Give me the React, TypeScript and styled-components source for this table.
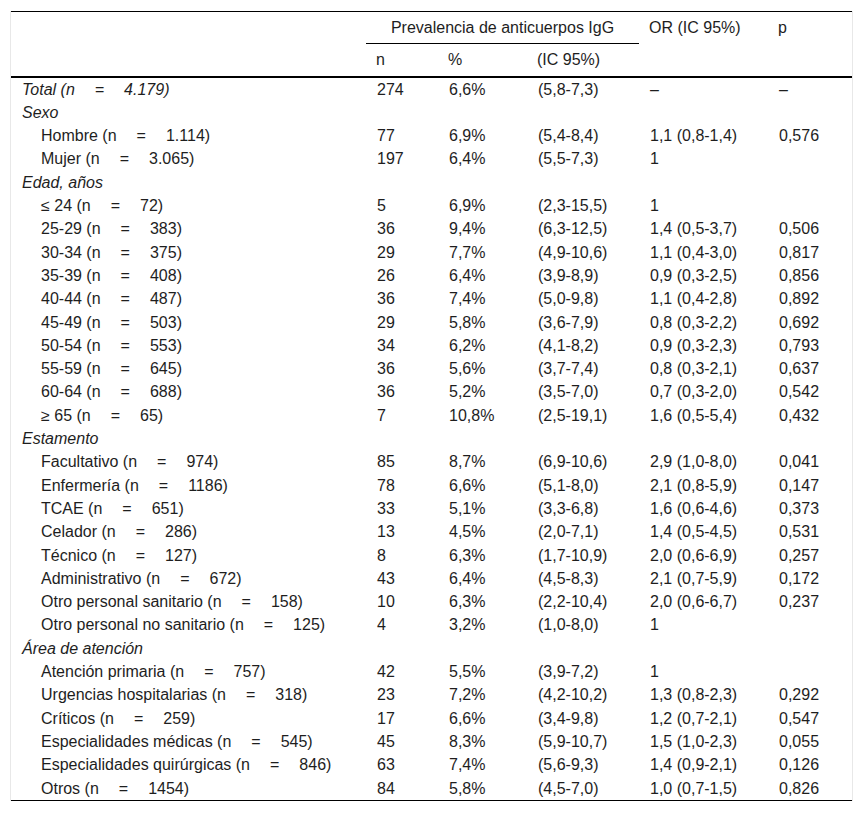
import React from "react";
import styled, { createGlobalStyle } from "styled-components";

const GlobalStyle = createGlobalStyle`
  body {
    margin: 0;
    background: #fff;
    font-family: "Liberation Sans", Arial, sans-serif;
    color: #1e1e1e;
  }
`;

const Frame = styled.div`
  margin: 11px 10px 0 10px;
  border-left: 1px solid #e8e8e8;
  border-right: 1px solid #e8e8e8;
`;

const Table = styled.table`
  width: 100%;
  border-collapse: collapse;
  table-layout: fixed;
  font-size: 16px;
  border-top: 1px solid #000;
  border-bottom: 1px solid #000;
`;

const Th = styled.th<{ $group?: boolean }>`
  text-align: left;
  font-weight: normal;
  padding: 7px 10px 7px 10px;
  line-height: 17.3px;
  vertical-align: top;
  border-bottom: ${(p) => (p.$group ? "1px solid #000" : "none")};
`;

const HeadRow = styled.tr<{ $last?: boolean }>`
  border-bottom: ${(p) => (p.$last ? "2px solid #000" : "none")};
`;

const Td = styled.td<{ $indent?: boolean; $italic?: boolean }>`
  padding: 3px 10px 3px ${(p) => (p.$indent ? "30px" : "11px")};
  line-height: 17.3px;
  font-style: ${(p) => (p.$italic ? "italic" : "normal")};
  white-space: nowrap;
`;

type Row =
  | { kind: "group"; label: string }
  | { kind: "item"; label: string; n: string; cells: string[]; italic?: boolean; top?: boolean };

const eq = (name: string, n: string) => `${name} (n\u2003\u2005=\u2003\u2005${n})`;

const rows: Row[] = [
  { kind: "item", top: true, italic: true, label: eq("Total", "4.179"), n: "274", cells: ["6,6%", "(5,8-7,3)", "–", "–"] },
  { kind: "group", label: "Sexo" },
  { kind: "item", label: eq("Hombre", "1.114"), n: "77", cells: ["6,9%", "(5,4-8,4)", "1,1 (0,8-1,4)", "0,576"] },
  { kind: "item", label: eq("Mujer", "3.065"), n: "197", cells: ["6,4%", "(5,5-7,3)", "1", ""] },
  { kind: "group", label: "Edad, años" },
  { kind: "item", label: eq("≤ 24", "72"), n: "5", cells: ["6,9%", "(2,3-15,5)", "1", ""] },
  { kind: "item", label: eq("25-29", "383"), n: "36", cells: ["9,4%", "(6,3-12,5)", "1,4 (0,5-3,7)", "0,506"] },
  { kind: "item", label: eq("30-34", "375"), n: "29", cells: ["7,7%", "(4,9-10,6)", "1,1 (0,4-3,0)", "0,817"] },
  { kind: "item", label: eq("35-39", "408"), n: "26", cells: ["6,4%", "(3,9-8,9)", "0,9 (0,3-2,5)", "0,856"] },
  { kind: "item", label: eq("40-44", "487"), n: "36", cells: ["7,4%", "(5,0-9,8)", "1,1 (0,4-2,8)", "0,892"] },
  { kind: "item", label: eq("45-49", "503"), n: "29", cells: ["5,8%", "(3,6-7,9)", "0,8 (0,3-2,2)", "0,692"] },
  { kind: "item", label: eq("50-54", "553"), n: "34", cells: ["6,2%", "(4,1-8,2)", "0,9 (0,3-2,3)", "0,793"] },
  { kind: "item", label: eq("55-59", "645"), n: "36", cells: ["5,6%", "(3,7-7,4)", "0,8 (0,3-2,1)", "0,637"] },
  { kind: "item", label: eq("60-64", "688"), n: "36", cells: ["5,2%", "(3,5-7,0)", "0,7 (0,3-2,0)", "0,542"] },
  { kind: "item", label: eq("≥ 65", "65"), n: "7", cells: ["10,8%", "(2,5-19,1)", "1,6 (0,5-5,4)", "0,432"] },
  { kind: "group", label: "Estamento" },
  { kind: "item", label: eq("Facultativo", "974"), n: "85", cells: ["8,7%", "(6,9-10,6)", "2,9 (1,0-8,0)", "0,041"] },
  { kind: "item", label: eq("Enfermería", "1186"), n: "78", cells: ["6,6%", "(5,1-8,0)", "2,1 (0,8-5,9)", "0,147"] },
  { kind: "item", label: eq("TCAE", "651"), n: "33", cells: ["5,1%", "(3,3-6,8)", "1,6 (0,6-4,6)", "0,373"] },
  { kind: "item", label: eq("Celador", "286"), n: "13", cells: ["4,5%", "(2,0-7,1)", "1,4 (0,5-4,5)", "0,531"] },
  { kind: "item", label: eq("Técnico", "127"), n: "8", cells: ["6,3%", "(1,7-10,9)", "2,0 (0,6-6,9)", "0,257"] },
  { kind: "item", label: eq("Administrativo", "672"), n: "43", cells: ["6,4%", "(4,5-8,3)", "2,1 (0,7-5,9)", "0,172"] },
  { kind: "item", label: eq("Otro personal sanitario", "158"), n: "10", cells: ["6,3%", "(2,2-10,4)", "2,0 (0,6-6,7)", "0,237"] },
  { kind: "item", label: eq("Otro personal no sanitario", "125"), n: "4", cells: ["3,2%", "(1,0-8,0)", "1", ""] },
  { kind: "group", label: "Área de atención" },
  { kind: "item", label: eq("Atención primaria", "757"), n: "42", cells: ["5,5%", "(3,9-7,2)", "1", ""] },
  { kind: "item", label: eq("Urgencias hospitalarias", "318"), n: "23", cells: ["7,2%", "(4,2-10,2)", "1,3 (0,8-2,3)", "0,292"] },
  { kind: "item", label: eq("Críticos", "259"), n: "17", cells: ["6,6%", "(3,4-9,8)", "1,2 (0,7-2,1)", "0,547"] },
  { kind: "item", label: eq("Especialidades médicas", "545"), n: "45", cells: ["8,3%", "(5,9-10,7)", "1,5 (1,0-2,3)", "0,055"] },
  { kind: "item", label: eq("Especialidades quirúrgicas", "846"), n: "63", cells: ["7,4%", "(5,6-9,3)", "1,4 (0,9-2,1)", "0,126"] },
  { kind: "item", label: eq("Otros", "1454"), n: "84", cells: ["5,8%", "(4,5-7,0)", "1,0 (0,7-1,5)", "0,826"] },
];

const widths = [355, 72, 89, 112, 129, 84];

export default function App() {
  return (
    <>
      <GlobalStyle />
      <Frame>
        <Table>
          <colgroup>
            {widths.map((w, i) => (
              <col key={i} style={{ width: w }} />
            ))}
          </colgroup>
          <thead>
            <HeadRow>
              <Th />
              <Th colSpan={3} $group style={{ textAlign: "center" }}>
                Prevalencia de anticuerpos IgG
              </Th>
              <Th>OR (IC 95%)</Th>
              <Th>p</Th>
            </HeadRow>
            <HeadRow $last>
              <Th />
              <Th>n</Th>
              <Th>%</Th>
              <Th>(IC 95%)</Th>
              <Th />
              <Th />
            </HeadRow>
          </thead>
          <tbody>
            {rows.map((r, i) =>
              r.kind === "group" ? (
                <tr key={i}>
                  <Td $italic colSpan={6}>
                    {r.label}
                  </Td>
                </tr>
              ) : (
                <tr key={i}>
                  <Td $italic={r.italic} $indent={!r.top}>
                    {r.label}
                  </Td>
                  <Td>{r.n}</Td>
                  {r.cells.map((c, j) => (
                    <Td key={j}>{c}</Td>
                  ))}
                </tr>
              )
            )}
          </tbody>
        </Table>
      </Frame>
    </>
  );
}
